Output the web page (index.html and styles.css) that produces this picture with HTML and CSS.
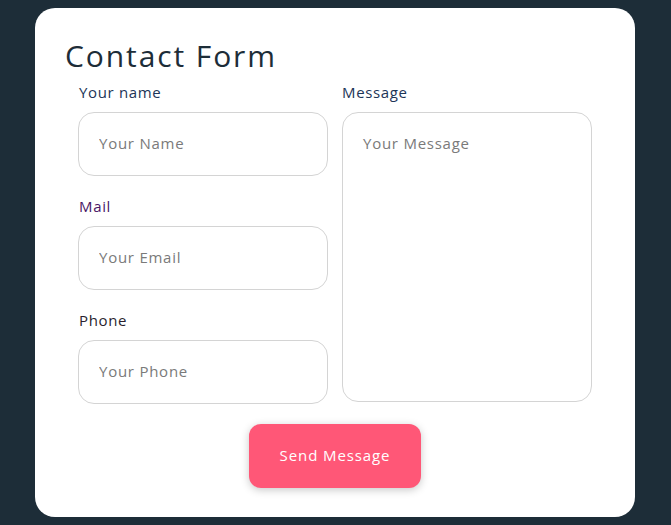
FILE: index.html
```html
<!DOCTYPE html>
<html lang="en">
<head>
<meta charset="utf-8">
<title>Contact Form</title>
<link rel="stylesheet" href="styles.css">
</head>
<body>
<form class="card">
  <h1 class="title">Contact Form</h1>
  <div class="columns">
    <div class="col">
      <label class="label label-name">Your name</label>
      <input class="field" type="text" placeholder="Your Name">
      <label class="label label-mail">Mail</label>
      <input class="field" type="email" placeholder="Your Email">
      <label class="label label-phone">Phone</label>
      <input class="field" type="tel" placeholder="Your Phone">
    </div>
    <div class="col">
      <label class="label label-msg">Message</label>
      <textarea class="area" placeholder="Your Message"></textarea>
    </div>
  </div>
  <div class="actions">
    <button class="send" type="button">Send Message</button>
  </div>
</form>
</body>
</html>
```
FILE: styles.css
```css
html, body {
  margin: 0;
  padding: 0;
}
body {
  background: #1d2d38;
  font-family: "Open Sans", "Liberation Sans", sans-serif;
  padding: 8px 1px 0 0;
}
.card {
  box-sizing: border-box;
  width: 600px;
  height: 509px;
  margin: 0 auto;
  background: #ffffff;
  border-radius: 20px;
  padding: 30px 30px 30px 30px;
}
.title {
  margin: 0;
  font-size: 30px;
  font-weight: 500;
  line-height: 36px;
  letter-spacing: 1.9px;
  color: #1d2d38;
}
.columns {
  display: flex;
  justify-content: center;
  gap: 14px;
  margin-top: 8px;
}
.col {
  width: 250px;
  display: flex;
  flex-direction: column;
}
.label {
  display: block;
  font-size: 15px;
  line-height: 20px;
  letter-spacing: 0.65px;
  margin-bottom: 10px;
  padding-left: 1px;
}
.label-name { color: #1d3557; }
.label-mail { color: #4a1766; }
.label-phone { color: #2a1f2e; }
.label-msg { color: #1d3557; padding-left: 0; }
.field + .label {
  margin-top: 20px;
}
.field, .area {
  box-sizing: border-box;
  width: 250px;
  border: 1px solid #d4d4d4;
  border-radius: 16px;
  background: #fff;
  font-family: inherit;
  font-size: 15px;
  letter-spacing: 0.75px;
  color: #333;
  padding: 0 20px 2px;
  outline: none;
}
.field {
  height: 64px;
}
.area {
  height: 290px;
  padding: 19px 20px;
  resize: none;
  line-height: 22px;
}
.field::placeholder, .area::placeholder {
  color: #7a7a7a;
}
.actions {
  display: flex;
  justify-content: center;
  margin-top: 20px;
}
.send {
  width: 172px;
  height: 64px;
  border: none;
  border-radius: 12px;
  background: #ff5777;
  color: #fff;
  font-family: inherit;
  font-size: 15px;
  letter-spacing: 0.9px;
  padding: 0 0 3px;
  box-shadow: 0 2px 8px rgba(0, 0, 0, 0.22);
}
```
